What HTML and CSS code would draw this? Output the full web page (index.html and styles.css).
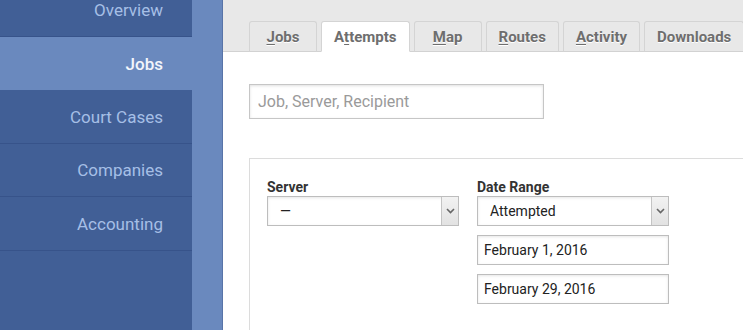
FILE: index.html
```html
<!DOCTYPE html>
<html lang="en">
<head>
    <meta charset="UTF-8">
    <meta name="viewport" content="width=device-width, initial-scale=1.0">
    <title>Jobs - Attempts</title>
    <link rel="stylesheet" href="styles.css">
</head>
<body>

    <div class="layout">
        <!-- Side navigation -->
        <aside class="sidebar">
            <ul class="side-nav">
                <li class="side-item">Overview</li>
                <li class="side-item active">Jobs</li>
                <li class="side-item">Court Cases</li>
                <li class="side-item">Companies</li>
                <li class="side-item">Accounting</li>
            </ul>
        </aside>

        <main class="main">
            <div class="tab-bar">
                <a class="tab"><u>J</u>obs</a>
                <a class="tab active">A<u>t</u>tempts</a>
                <a class="tab"><u>M</u>ap</a>
                <a class="tab"><u>R</u>outes</a>
                <a class="tab"><u>A</u>ctivity</a>
                <a class="tab">Downloads</a>
            </div>

            <div class="content">
                <input class="search" type="text" placeholder="Job, Server, Recipient">

                <div class="filter-panel">
                    <div class="filter-col">
                        <label class="filter-label">Server</label>
                        <div class="select">
                            <span class="select-value">&mdash;</span>
                            <span class="select-arrow">
                                <svg width="9" height="6" viewBox="0 0 9 6"><path d="M1 1 L4.5 4.5 L8 1" fill="none" stroke="#666" stroke-width="1.6"/></svg>
                            </span>
                        </div>
                    </div>
                    <div class="filter-col">
                        <label class="filter-label">Date Range</label>
                        <div class="select">
                            <span class="select-value">Attempted</span>
                            <span class="select-arrow">
                                <svg width="9" height="6" viewBox="0 0 9 6"><path d="M1 1 L4.5 4.5 L8 1" fill="none" stroke="#666" stroke-width="1.6"/></svg>
                            </span>
                        </div>
                        <input class="field" type="text" value="February 1, 2016">
                        <input class="field" type="text" value="February 29, 2016">
                    </div>
                </div>
            </div>
        </main>
    </div>

</body>
</html>
```

FILE: styles.css
```css
* {
    box-sizing: border-box;
    margin: 0;
    padding: 0;
}

body {
    font-family: Roboto, "Liberation Sans", sans-serif;
    background: #fff;
    overflow: hidden;
}

.layout {
    display: flex;
    height: 330px;
}

/* Sidebar */
.sidebar {
    width: 223px;
    flex-shrink: 0;
    background: #6a89be;
    border-right: 1px solid #5874a8;
}

.side-nav {
    list-style: none;
    width: 192px;
    height: 360px;
    background: #415f96;
    margin-top: -16.4px;
}

.side-item {
    height: 53.4px;
    display: flex;
    align-items: center;
    justify-content: flex-end;
    padding-right: 29px;
    padding-top: 1px;
    font-size: 17px;
    color: #a6bfe6;
    border-bottom: 1px solid #37538a;
}

.side-item.active {
    width: 222px;
    padding-right: 59px;
    background: #6a89be;
    color: #f2f5fb;
    font-weight: 500;
    border-bottom: none;
}

/* Main */
.main {
    flex: 1;
    min-width: 0;
}

.tab-bar {
    height: 52px;
    background: #e8e8e8;
    border-bottom: 1px solid #d2d2d2;
    display: flex;
    align-items: flex-end;
    gap: 4px;
    padding-left: 26px;
    white-space: nowrap;
}

.tab {
    height: 31px;
    min-width: 68px;
    padding: 0 12px;
    margin-bottom: -1px;
    display: flex;
    align-items: center;
    justify-content: center;
    background: #e8e8e8;
    border: 1px solid #d4d4d4;
    border-bottom-color: #d2d2d2;
    border-radius: 3px 3px 0 0;
    font-size: 15px;
    font-weight: 700;
    color: #6e6e6e;
    text-shadow: 0 1px 0 #fff;
    flex-shrink: 0;
}

.tab.active {
    background: #fff;
    border-bottom-color: #fff;
}

.tab u {
    text-decoration-thickness: 1px;
    text-underline-offset: 2px;
}

/* Content */
.content {
    padding: 32px 0 0 26px;
}

.search {
    display: block;
    width: 295px;
    height: 35px;
    border: 1px solid #c6c6c6;
    box-shadow: inset 0 1px 3px rgba(0, 0, 0, 0.12);
    padding: 0 8px;
    font-family: inherit;
    font-size: 16px;
    color: #333;
}

.search::placeholder {
    color: #9a9a9a;
}

.filter-panel {
    margin-top: 39px;
    border-top: 1px solid #dcdcdc;
    border-left: 1px solid #dcdcdc;
    padding: 20px 0 0 17px;
    display: flex;
    gap: 18px;
    height: 200px;
}

.filter-col {
    width: 192px;
    display: flex;
    flex-direction: column;
    gap: 9px;
}

.filter-label {
    font-size: 14px;
    font-weight: 700;
    color: #333;
    line-height: 16px;
    margin-bottom: -8px;
}

.select {
    height: 30px;
    display: flex;
    border: 1px solid #bdbdbd;
    background: #fff;
    box-shadow: inset 0 1px 3px rgba(0, 0, 0, 0.1);
}

.select-value {
    flex: 1;
    display: flex;
    align-items: center;
    padding-left: 12px;
    font-size: 14px;
    color: #222;
}

.select-arrow {
    width: 17px;
    display: flex;
    align-items: center;
    justify-content: center;
    border-left: 1px solid #c4c4c4;
    background: linear-gradient(#f2f2f2, #e2e2e2);
}

.field {
    height: 30px;
    border: 1px solid #bdbdbd;
    box-shadow: inset 0 1px 3px rgba(0, 0, 0, 0.1);
    padding: 0 6px;
    font-family: inherit;
    font-size: 14px;
    color: #222;
}
```
